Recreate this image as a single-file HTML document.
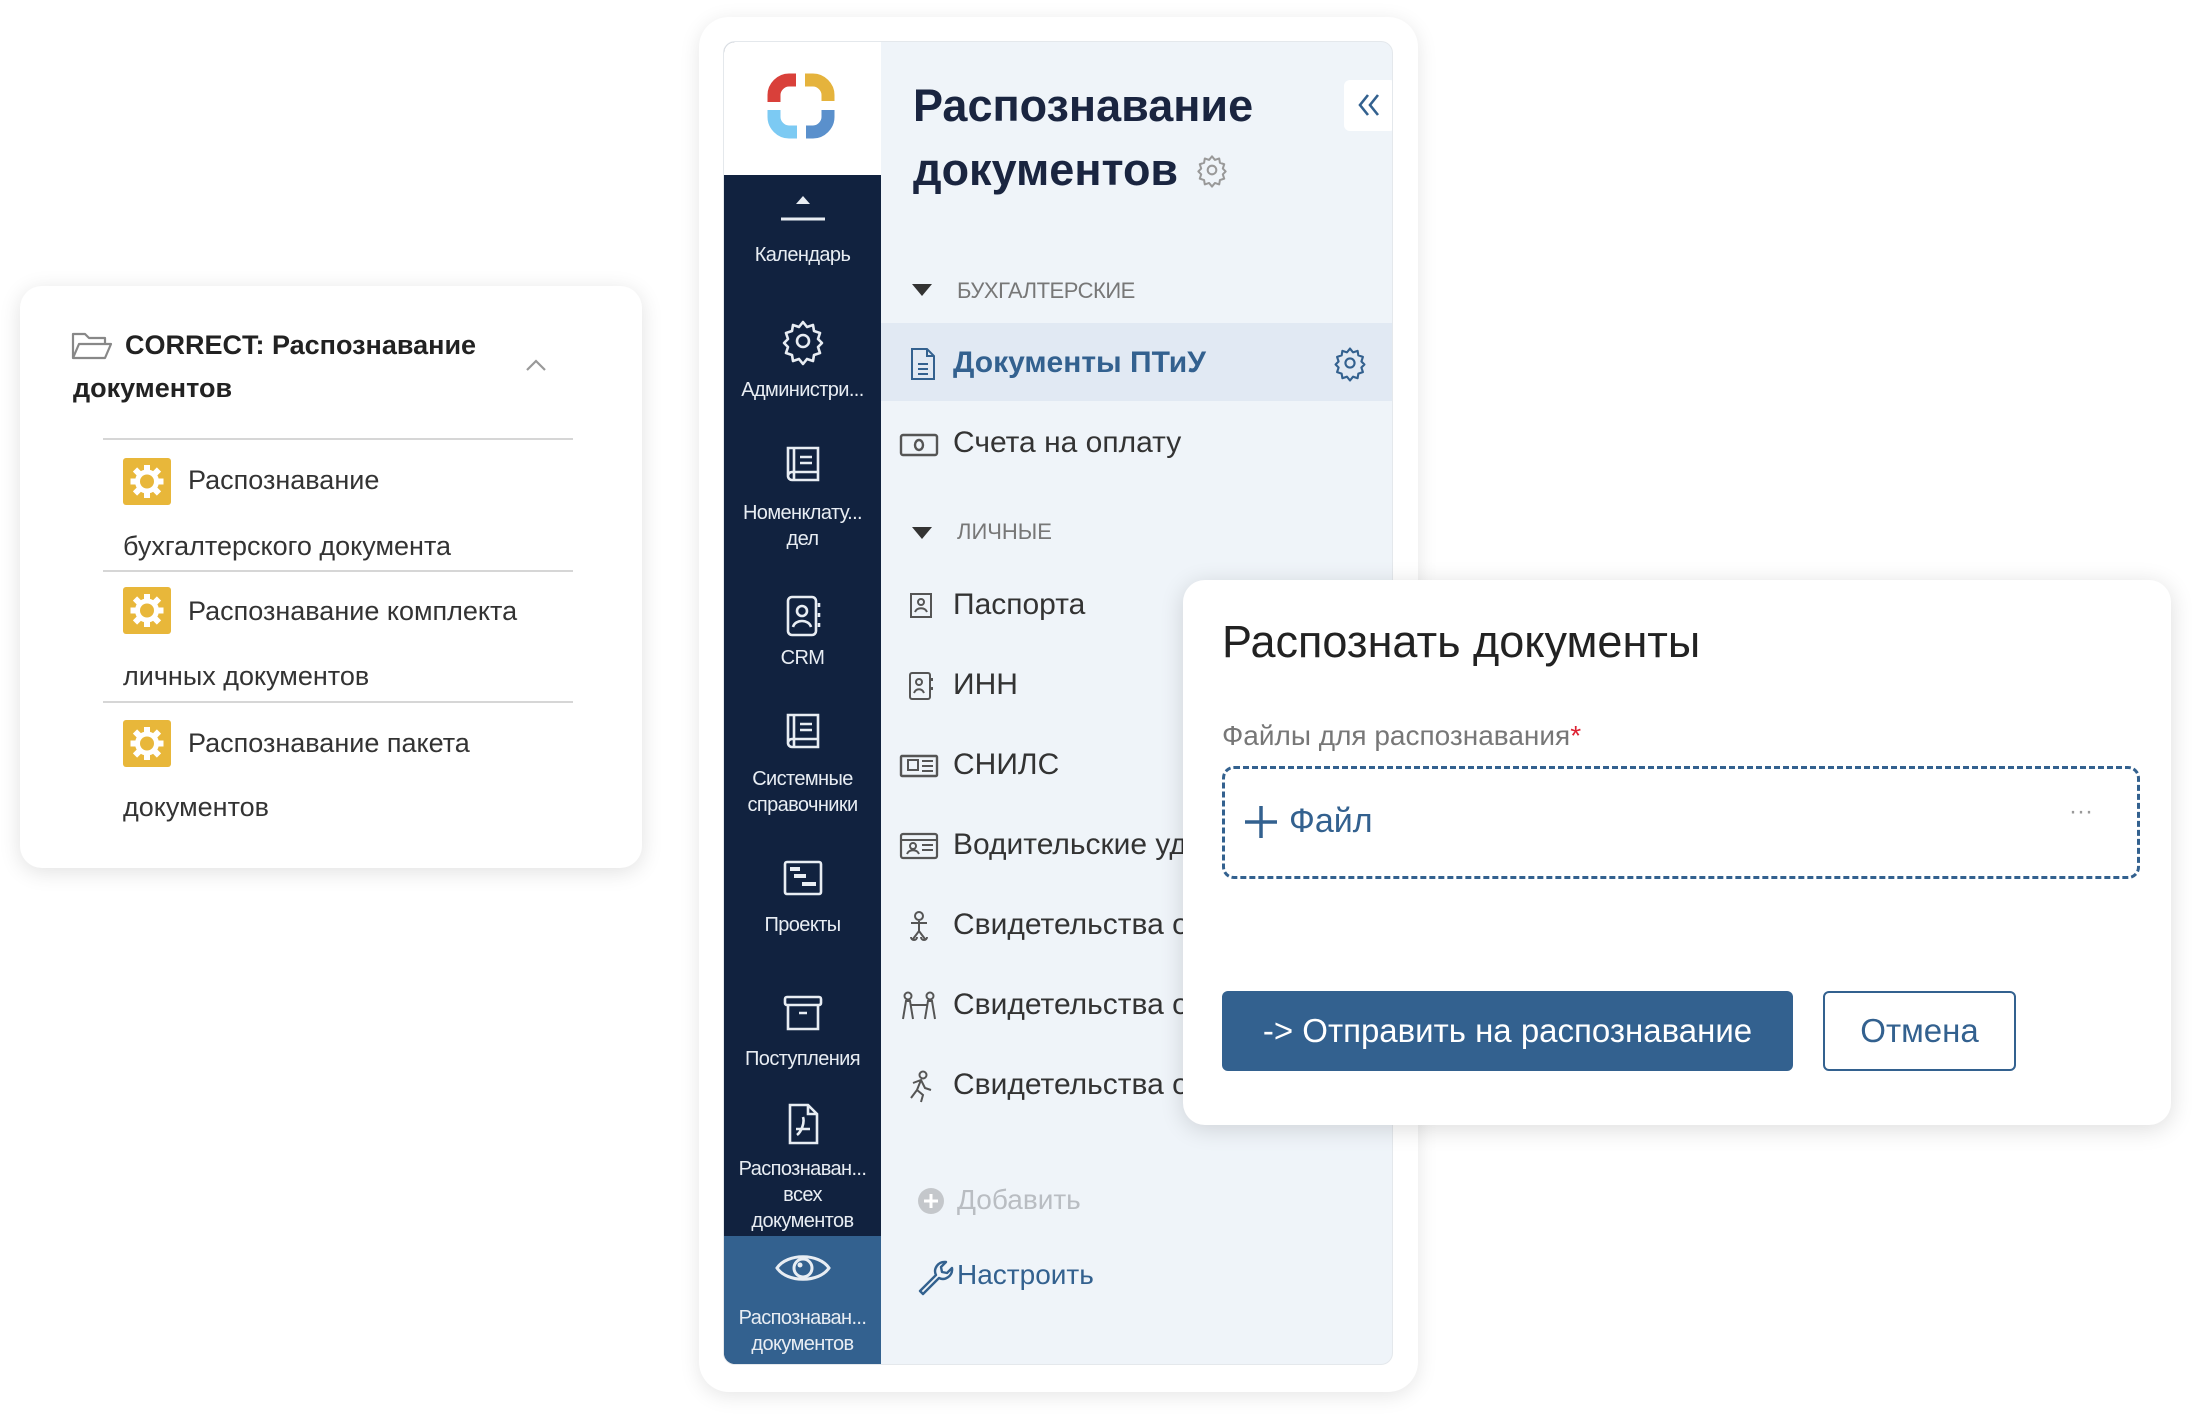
<!DOCTYPE html>
<html><head><meta charset="utf-8"><style>
*{margin:0;padding:0;box-sizing:border-box}
body{width:2192px;height:1416px;background:#fff;position:relative;overflow:hidden;font-family:"Liberation Sans","Noto Sans CJK SC",sans-serif}
.a{position:absolute;white-space:nowrap}
.card{position:absolute;left:20px;top:286px;width:622px;height:582px;background:#fff;border-radius:22px;box-shadow:0 4px 22px rgba(0,0,0,.12)}
.hr{position:absolute;left:83px;width:470px;height:2px;background:#d6d6d6}
.ic{position:absolute;left:103px;width:48px;height:47px;background:#e8b73a;border-radius:3px}
.lt{font-size:27px;color:#333}
.outer{position:absolute;left:699px;top:17px;width:719px;height:1375px;background:#fff;border-radius:30px;box-shadow:0 4px 20px rgba(0,0,0,.1)}
.inner{position:absolute;left:723px;top:41px;width:670px;height:1324px;background:#eff4f9;border-radius:12px;overflow:hidden;border:1px solid #e4e8ec}
.side{position:absolute;left:0;top:0;width:157px;height:100%;background:#11223f}
.sl{position:absolute;left:0;width:157px;text-align:center;color:#e8edf3;font-size:20px;letter-spacing:-0.6px;line-height:26px}
.si{position:absolute;left:54px;width:50px;height:50px}
.it{position:absolute;left:229px;font-size:30px;color:#333;white-space:nowrap}
.ii{position:absolute;left:175px;width:40px;height:34px}
.modal{position:absolute;left:1183px;top:580px;width:988px;height:545px;background:#fff;border-radius:22px;box-shadow:0 4px 24px rgba(0,0,0,.14)}
</style></head><body>

<div class="card">
  <svg class="a" style="left:51px;top:44px" width="42" height="32" viewBox="0 0 42 32"><path d="M2 28V4h12l4 4h16v6M2 28l6-14h32l-6 14z" fill="none" stroke="#888" stroke-width="2.2" stroke-linejoin="round"/></svg>
  <div class="a" style="left:105px;top:44px;font-size:27px;font-weight:bold;color:#222">CORRECT: Распознавание</div>
  <div class="a" style="left:53px;top:87px;font-size:27px;font-weight:bold;color:#222">документов</div>
  <svg class="a" style="left:505px;top:72px" width="22" height="14" viewBox="0 0 22 14"><path d="M2 12L11 3l9 9" fill="none" stroke="#999" stroke-width="2.2"/></svg>
  <div class="hr" style="top:152px"></div>
  <div class="hr" style="top:284px"></div>
  <div class="hr" style="top:415px"></div>
  <div class="ic" style="top:172px"><svg width="48" height="47" viewBox="0 0 48 47"><g fill="#fff"><circle cx="24" cy="23.5" r="12"/><g stroke="#fff" stroke-width="6"><path d="M24 7v33M7.5 23.5h33M12 11.5l24 24M36 11.5l-24 24"/></g></g><circle cx="24" cy="23.5" r="7" fill="#e8b73a"/></svg></div>
  <div class="a lt" style="left:168px;top:179px">Распознавание</div>
  <div class="a lt" style="left:103px;top:245px">бухгалтерского документа</div>
  <div class="ic" style="top:301px"><svg width="48" height="47" viewBox="0 0 48 47"><g fill="#fff"><circle cx="24" cy="23.5" r="12"/><g stroke="#fff" stroke-width="6"><path d="M24 7v33M7.5 23.5h33M12 11.5l24 24M36 11.5l-24 24"/></g></g><circle cx="24" cy="23.5" r="7" fill="#e8b73a"/></svg></div>
  <div class="a lt" style="left:168px;top:310px">Распознавание комплекта</div>
  <div class="a lt" style="left:103px;top:375px">личных документов</div>
  <div class="ic" style="top:434px"><svg width="48" height="47" viewBox="0 0 48 47"><g fill="#fff"><circle cx="24" cy="23.5" r="12"/><g stroke="#fff" stroke-width="6"><path d="M24 7v33M7.5 23.5h33M12 11.5l24 24M36 11.5l-24 24"/></g></g><circle cx="24" cy="23.5" r="7" fill="#e8b73a"/></svg></div>
  <div class="a lt" style="left:168px;top:442px">Распознавание пакета</div>
  <div class="a lt" style="left:103px;top:506px">документов</div>
</div>

<div class="outer"></div>
<div class="inner">
  <div class="side">
    <div style="position:absolute;left:0;top:0;width:157px;height:133px;background:#fff"></div>
    <svg class="a" style="left:43px;top:31px" width="68" height="66" viewBox="0 0 68 66">
      <path d="M29 7H22C14 7 7 14 7 22v7" fill="none" stroke="#d9403a" stroke-width="13"/>
      <path d="M38 7h8c8 0 15 7 15 15v6" fill="none" stroke="#e5b33c" stroke-width="13"/>
      <path d="M61 37v7c0 8-7 15-15 15h-7" fill="none" stroke="#5a90cc" stroke-width="13"/>
      <path d="M30 59h-8C14 59 7 52 7 44v-7" fill="none" stroke="#7ccaf3" stroke-width="13"/>
    </svg>
    <svg class="si" style="top:148px;left:54px" viewBox="0 0 50 50"><path d="M18 14l7-8 7 8z" fill="#e8edf3"/><path d="M3 29h44" stroke="#e8edf3" stroke-width="3"/></svg>
    <div class="sl" style="top:200px">Календарь</div>
    <svg class="si" style="top:274px" viewBox="0 0 50 50"><path d="M25 6l4 5 6-2 1 6 6 2-2 6 4 4-4 4 2 6-6 2-1 6-6-2-4 5-4-5-6 2-1-6-6-2 2-6-4-4 4-4-2-6 6-2 1-6 6 2z" fill="none" stroke="#e8edf3" stroke-width="2.6" stroke-linejoin="round"/><circle cx="25" cy="25" r="6" fill="none" stroke="#e8edf3" stroke-width="2.6"/></svg>
    <div class="sl" style="top:335px">Администри...</div>
    <svg class="si" style="top:398px" viewBox="0 0 50 50"><path d="M10 8h30v32H14a4 4 0 0 1-4-4zM16 8v32M10 36a4 4 0 0 1 4-4h26M22 17h12M22 23h12" fill="none" stroke="#e8edf3" stroke-width="2.6"/></svg>
    <div class="sl" style="top:458px">Номенклату...</div>
    <div class="sl" style="top:484px">дел</div>
    <svg class="si" style="top:549px" viewBox="0 0 50 50"><rect x="10" y="6" width="28" height="38" rx="4" fill="none" stroke="#e8edf3" stroke-width="2.6"/><circle cx="24" cy="20" r="5" fill="none" stroke="#e8edf3" stroke-width="2.6"/><path d="M15 36c2-8 16-8 18 0M41 12v4M41 22v4M41 32v4" fill="none" stroke="#e8edf3" stroke-width="2.6"/></svg>
    <div class="sl" style="top:603px">CRM</div>
    <svg class="si" style="top:665px" viewBox="0 0 50 50"><path d="M10 8h30v32H14a4 4 0 0 1-4-4zM16 8v32M10 36a4 4 0 0 1 4-4h26M22 17h12M22 23h12" fill="none" stroke="#e8edf3" stroke-width="2.6"/></svg>
    <div class="sl" style="top:724px">Системные</div>
    <div class="sl" style="top:750px">справочники</div>
    <svg class="si" style="top:812px" viewBox="0 0 50 50"><rect x="7" y="8" width="36" height="32" rx="2" fill="none" stroke="#e8edf3" stroke-width="2.6"/><path d="M12 15h10M16 22h12M24 30h14" stroke="#e8edf3" stroke-width="4"/></svg>
    <div class="sl" style="top:870px">Проекты</div>
    <svg class="si" style="top:947px" viewBox="0 0 50 50"><rect x="7" y="8" width="36" height="8" rx="2" fill="none" stroke="#e8edf3" stroke-width="2.6"/><path d="M10 16v24h30V16M21 24h8" fill="none" stroke="#e8edf3" stroke-width="2.6"/></svg>
    <div class="sl" style="top:1004px">Поступления</div>
    <svg class="si" style="top:1057px" viewBox="0 0 50 50"><path d="M12 6h18l9 9v29H12zM30 6v9h9M19 36c4-3 8-12 6-18M18 30h14" fill="none" stroke="#e8edf3" stroke-width="2.6"/></svg>
    <div class="sl" style="top:1114px">Распознаван...</div>
    <div class="sl" style="top:1140px">всех</div>
    <div class="sl" style="top:1166px">документов</div>
    <div style="position:absolute;left:0;top:1194px;width:157px;height:140px;background:#33618f"></div>
    <svg class="si" style="top:1201px;left:49px;width:60px" viewBox="0 0 60 50"><path d="M4 25C14 10 46 10 56 25 46 40 14 40 4 25z" fill="none" stroke="#e8edf3" stroke-width="3"/><circle cx="30" cy="25" r="9" fill="none" stroke="#e8edf3" stroke-width="3"/><circle cx="27" cy="22" r="2.5" fill="#e8edf3"/></svg>
    <div class="sl" style="top:1263px">Распознаван...</div>
    <div class="sl" style="top:1289px">документов</div>
  </div>

  <div class="a" style="left:189px;top:38px;font-size:45px;font-weight:bold;color:#1a2540">Распознавание</div>
  <div class="a" style="left:189px;top:102px;font-size:45px;font-weight:bold;color:#1a2540">документов</div>
  <svg class="a" style="left:470px;top:110px" width="36" height="36" viewBox="0 0 50 50"><path d="M25 6l4 5 6-2 1 6 6 2-2 6 4 4-4 4 2 6-6 2-1 6-6-2-4 5-4-5-6 2-1-6-6-2 2-6-4-4 4-4-2-6 6-2 1-6 6 2z" fill="none" stroke="#999" stroke-width="2.8" stroke-linejoin="round"/><circle cx="25" cy="25" r="6" fill="none" stroke="#999" stroke-width="2.8"/></svg>
  <div class="a" style="left:620px;top:38px;width:52px;height:51px;background:#fff;border-radius:6px"></div>
  <svg class="a" style="left:630px;top:48px" width="30" height="30" viewBox="0 0 30 30"><path d="M14 5L6 15l8 10M24 5l-8 10 8 10" fill="none" stroke="#33618f" stroke-width="2.6"/></svg>

  <svg class="a" style="left:188px;top:242px" width="20" height="14"><path d="M0 0h20L10 12z" fill="#333"/></svg>
  <div class="a" style="left:233px;top:236px;font-size:22px;color:#777;letter-spacing:-0.5px">БУХГАЛТЕРСКИЕ</div>
  <div class="a" style="left:157px;top:281px;width:520px;height:78px;background:#e1e9f3"></div>
  <svg class="ii" style="top:305px;left:179px" viewBox="0 0 30 34"><path d="M4 2h15l7 7v23H4zM19 2v7h7M10 17h10M10 22h10M10 27h10" fill="none" stroke="#33618f" stroke-width="2"/></svg>
  <div class="it" style="top:304px;font-weight:bold;color:#33618f">Документы ПТиУ</div>
  <svg class="a" style="left:607px;top:302px" width="38" height="38" viewBox="0 0 50 50"><path d="M25 6l4 5 6-2 1 6 6 2-2 6 4 4-4 4 2 6-6 2-1 6-6-2-4 5-4-5-6 2-1-6-6-2 2-6-4-4 4-4-2-6 6-2 1-6 6 2z" fill="none" stroke="#33618f" stroke-width="2.8" stroke-linejoin="round"/><circle cx="25" cy="25" r="6" fill="none" stroke="#33618f" stroke-width="2.8"/></svg>
  <svg class="ii" style="top:386px" viewBox="0 0 40 34"><rect x="2" y="7" width="36" height="20" rx="2" fill="none" stroke="#555" stroke-width="2.4"/><ellipse cx="20" cy="17" rx="4" ry="5" fill="none" stroke="#555" stroke-width="2.4"/></svg>
  <div class="it" style="top:384px">Счета на оплату</div>
  <svg class="a" style="left:188px;top:485px" width="20" height="14"><path d="M0 0h20L10 12z" fill="#333"/></svg>
  <div class="a" style="left:233px;top:477px;font-size:22px;color:#777">ЛИЧНЫЕ</div>

  <svg class="ii" style="top:547px" viewBox="0 0 40 34"><rect x="12" y="5" width="20" height="23" fill="none" stroke="#555" stroke-width="2"/><circle cx="22" cy="13" r="3" fill="none" stroke="#555" stroke-width="2"/><path d="M16 23c2-5 10-5 12 0" fill="none" stroke="#555" stroke-width="2"/></svg>
  <div class="it" style="top:546px">Паспорта</div>
  <svg class="ii" style="top:627px" viewBox="0 0 40 34"><rect x="11" y="4" width="20" height="26" rx="2" fill="none" stroke="#555" stroke-width="2"/><circle cx="20" cy="13" r="3" fill="none" stroke="#555" stroke-width="2"/><path d="M15 24c2-5 8-5 10 0M33 9v3M33 18v3" fill="none" stroke="#555" stroke-width="2"/></svg>
  <div class="it" style="top:626px">ИНН</div>
  <svg class="ii" style="top:707px" viewBox="0 0 40 34"><rect x="2" y="7" width="36" height="20" rx="1" fill="none" stroke="#555" stroke-width="2.4"/><rect x="9" y="11" width="10" height="10" fill="none" stroke="#555" stroke-width="2"/><path d="M23 12h11M23 17h11M23 22h11" stroke="#555" stroke-width="2"/></svg>
  <div class="it" style="top:706px">СНИЛС</div>
  <svg class="ii" style="top:787px" viewBox="0 0 40 34"><rect x="2" y="5" width="36" height="24" rx="2" fill="none" stroke="#555" stroke-width="2.2"/><path d="M2 11h36M23 16h11M23 21h11M8 25c2-5 10-5 12 0" fill="none" stroke="#555" stroke-width="2"/><circle cx="14" cy="17" r="3" fill="none" stroke="#555" stroke-width="2"/></svg>
  <div class="it" style="top:786px">Водительские удостоверения</div>
  <svg class="ii" style="top:867px" viewBox="0 0 40 34"><circle cx="20" cy="7" r="4" fill="none" stroke="#555" stroke-width="2"/><path d="M12 14h16M20 12v10M14 30l6-8 6 8M12 28a3 3 0 1 0 6 0M22 28a3 3 0 1 0 6 0" fill="none" stroke="#555" stroke-width="2"/></svg>
  <div class="it" style="top:866px">Свидетельства о рождении</div>
  <svg class="ii" style="top:947px" viewBox="0 0 40 34"><circle cx="9" cy="7" r="3.5" fill="none" stroke="#555" stroke-width="2"/><circle cx="31" cy="7" r="3.5" fill="none" stroke="#555" stroke-width="2"/><path d="M4 30l3-18h4l3 18M26 30l3-18h4l3 18M12 16h16" fill="none" stroke="#555" stroke-width="2"/></svg>
  <div class="it" style="top:946px">Свидетельства о браке</div>
  <svg class="ii" style="top:1027px" viewBox="0 0 40 34"><circle cx="24" cy="6" r="3.5" fill="none" stroke="#555" stroke-width="2"/><path d="M14 14l8-3 4 8 6 2M22 11l-4 10 6 5-2 7M18 21l-6 8" fill="none" stroke="#555" stroke-width="2"/></svg>
  <div class="it" style="top:1026px">Свидетельства о расторжении</div>

  <svg class="a" style="left:193px;top:1145px" width="28" height="28"><circle cx="14" cy="14" r="13" fill="#c4c7cb"/><path d="M14 7v14M7 14h14" stroke="#fff" stroke-width="3"/></svg>
  <div class="a" style="left:233px;top:1142px;font-size:28px;color:#b9bdc2">Добавить</div>
  <svg class="a" style="left:190px;top:1215px" width="40" height="40" viewBox="0 0 40 40"><path d="M6 34l16-16c-3-6 2-14 10-13l-5 5 1 5 5 1 5-5c1 8-7 13-13 10L9 37z" fill="none" stroke="#33618f" stroke-width="2.4" stroke-linejoin="round"/></svg>
  <div class="a" style="left:233px;top:1217px;font-size:28px;color:#33618f">Настроить</div>
</div>

<div class="modal">
  <div class="a" style="left:39px;top:36px;font-size:45px;color:#222">Распознать документы</div>
  <div class="a" style="left:39px;top:140px;font-size:28px;color:#777">Файлы для распознавания<span style="color:#d23">*</span></div>
  <div class="a" style="left:39px;top:186px;width:918px;height:113px;border:3px dashed #33618f;border-radius:12px"></div>
  <svg class="a" style="left:60px;top:224px" width="36" height="36"><path d="M18 2v32M2 18h32" stroke="#33618f" stroke-width="3.5"/></svg>
  <div class="a" style="left:106px;top:222px;font-size:34px;color:#33618f">Файл</div>
  <div class="a" style="left:886px;top:218px;font-size:24px;color:#999">···</div>
  <div class="a" style="left:39px;top:411px;width:571px;height:80px;background:#33618f;border-radius:6px;color:#fff;font-size:33px;text-align:center;line-height:80px">-&gt; Отправить на распознавание</div>
  <div class="a" style="left:640px;top:411px;width:193px;height:80px;border:2px solid #33618f;border-radius:6px;color:#33618f;font-size:33px;text-align:center;line-height:76px">Отмена</div>
</div>
</body></html>
